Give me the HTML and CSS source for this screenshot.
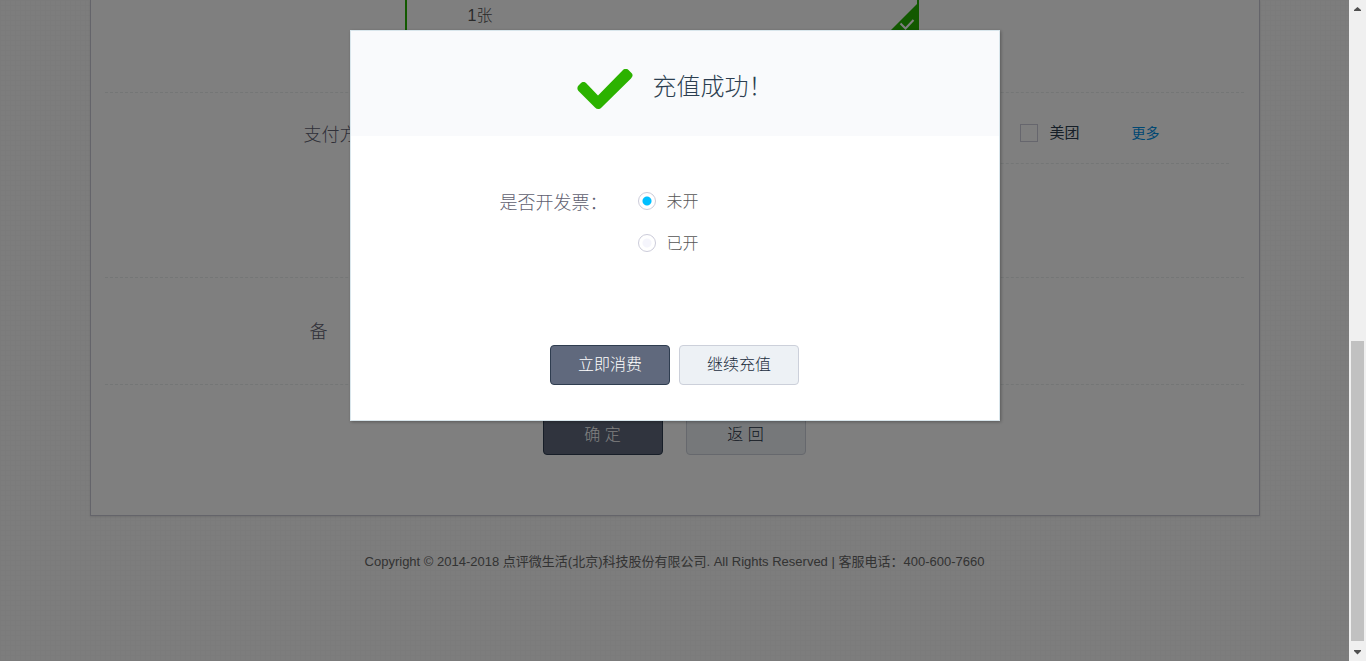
FILE: index.html
```html
<!DOCTYPE html>
<html lang="zh-CN">
<head>
<meta charset="utf-8">
<title>充值成功</title>
<link rel="stylesheet" href="styles.css">
</head>
<body>
<div class="stage">
  <main class="panel">
    <section class="row row-coupon">
      <div class="field">
        <div class="coupon">
          <span>1张</span>
          <svg class="corner" viewBox="0 0 31 31" aria-hidden="true"><path d="M31 0V31H0Z" fill="#24b300"/><path d="M12.500 21.500L17.500 26.500L25.500 18" fill="none" stroke="#fff" stroke-width="2"/></svg>
        </div>
      </div>
    </section>
    <section class="row row-pay">
      <span class="label">支付方式：</span>
      <div class="field pay-options">
        <label class="option"><input class="tick" type="checkbox">美团</label>
        <a class="more" href="#">更多</a>
      </div>
    </section>
    <section class="row row-note">
      <span class="label">备 &nbsp; &nbsp; &nbsp;注：</span>
    </section>
    <div class="actions page-actions">
      <button class="btn btn-dark" type="button">确 定</button>
      <button class="btn btn-light" type="button">返 回</button>
    </div>
  </main>
  <footer class="footer">Copyright © 2014-2018 点评微生活(北京)科技股份有限公司. All Rights Reserved | 客服电话：400-600-7660</footer>
  <div class="overlay">
    <div class="modal" role="dialog" aria-labelledby="title">
      <header class="modal-head">
        <svg class="check" viewBox="0 0 56 40" aria-hidden="true"><path d="M6.500 13C5 13 4.500 13.500 3.500 14.500L1.500 16.500C0 18 0 20.500 1.500 22L18 38.500C20 40.500 22.500 40.500 24.500 38.500L54 9.500C56 7.500 56 5.500 54.500 4L51.500 1C50 -.5 47.500 -.5 46 1L21 26.500L9.500 14.500C8.500 13.500 8 13 6.500 13Z" fill="#2cb200"/></svg>
        <h1 class="title" id="title">充值成功！</h1>
      </header>
      <div class="invoice" role="radiogroup" aria-labelledby="invoice">
        <span class="label" id="invoice">是否开发票：</span>
        <div class="choices">
          <label class="choice"><input class="radio" type="radio" name="invoice" checked><span class="choice-text">未开</span></label>
          <label class="choice"><input class="radio" type="radio" name="invoice"><span class="choice-text">已开</span></label>
        </div>
      </div>
      <div class="actions modal-actions">
        <button class="btn btn-dark" type="button">立即消费</button>
        <button class="btn btn-light" type="button">继续充值</button>
      </div>
    </div>
  </div>
</div>
<div class="scrollbar" aria-hidden="true">
  <svg class="arrow" viewBox="0 0 17 17"><path d="M5 11V10L8.500 7L12 10V11Z" fill="#505050"/></svg>
  <div class="track"><div class="thumb"></div></div>
  <svg class="arrow" viewBox="0 0 17 17"><path d="M5 6V7L8.500 10.500L12 7V6Z" fill="#505050"/></svg>
</div>
</body>
</html>
```
FILE: styles.css
```css
* { box-sizing: border-box; }

body {
  display: grid;
  grid-template-columns: 1fr 17px;
  min-height: 100vh;
  margin: 0;
  font: 16px/24px "Liberation Sans", "Noto Sans CJK SC", sans-serif;
  font-weight: 300;
  color: #555;
}

.stage {
  position: relative;
  background-color: #fafafa;
  background-image:
    linear-gradient(#f6f6f6 1px, transparent 1px),
    linear-gradient(90deg, #f6f6f6 1px, transparent 1px);
  background-size: 5px 5px;
}

.panel {
  max-width: 1170px;
  margin: 0 auto;
  padding: 0 15px 60px 14px;
  border: 1px solid #c9c9d4;
  border-top: 0;
  background: #fff;
  box-shadow: 0 1px 2px rgba(0, 0, 0, .1);
}

.row {
  display: grid;
  grid-template-columns: 289px 1fr;
  column-gap: 11px;
  align-items: start;
  border-bottom: 1px dashed #e8ecec;
}

.row-coupon { padding-bottom: 58px; }
.row-pay { min-height: 185px; }
.row-note { min-height: 107px; padding-top: 12px; }

.field { grid-column: 2; }

.label {
  padding-top: 30px;
  font-size: 18px;
  text-align: right;
  color: #606070;
}

.coupon {
  position: relative;
  width: 514px;
  height: 34px;
  padding: 4px 61px;
  border: 2px solid #24b300;
  border-top: 0;
}

.corner {
  position: absolute;
  right: -2px;
  bottom: -1px;
  width: 31px;
  height: 31px;
}

.pay-options {
  display: flex;
  justify-content: flex-end;
  align-items: center;
  gap: 52px;
  height: 71px;
  margin-right: 15px;
  padding: 10px 69px 0 0;
  border-bottom: 1px dashed #e8ecec;
}

.option {
  display: flex;
  align-items: center;
  gap: 11px;
  font-size: 15px;
  font-weight: 400;
  color: #2c3e50;
}

.tick {
  appearance: none;
  width: 18px;
  height: 18px;
  margin: 0;
  border: 1px solid #ccccda;
}

.more {
  font-size: 14px;
  font-weight: 400;
  color: #0090e6;
  text-decoration: none;
}

.actions {
  display: flex;
  justify-content: center;
}

.page-actions { gap: 23px; padding-top: 30px; }

.btn {
  width: 120px;
  height: 40px;
  padding: 0;
  border: 1px solid;
  border-radius: 4px;
  font: inherit;
}

.btn-dark {
  border-color: #2f3d50;
  background: #60697d;
  color: #fff;
}

.btn-light {
  border-color: #ccd0da;
  background: #edf1f5;
  color: #1c2e40;
}

.footer {
  padding: 34px 0;
  font-size: 13px;
  font-weight: 400;
  text-align: center;
  color: #666;
}

.overlay {
  position: absolute;
  inset: 0;
  display: flex;
  justify-content: center;
  align-items: flex-start;
  padding-top: 30px;
  background: rgba(0, 0, 0, .5);
}

.modal {
  width: 650px;
  padding-bottom: 35px;
  border: 1px solid #d9e6ec;
  background: #fff;
  box-shadow: 1px 1px 3px rgba(0, 0, 0, .3);
}

.modal-head {
  display: flex;
  justify-content: center;
  align-items: center;
  gap: 20px;
  height: 105px;
  padding-top: 11px;
  background: #f9fafc;
}

.check {
  width: 56px;
  height: 40px;
}

.title {
  margin: 0;
  padding-bottom: 4px;
  font-size: 24px;
  font-weight: 300;
  line-height: 32px;
  color: #2c3e50;
}

.invoice {
  display: flex;
  gap: 30px;
  padding: 44px 0 0 149px;
}

.invoice .label { padding-top: 11px; }

.choice {
  display: flex;
  align-items: center;
  gap: 11px;
  height: 42px;
}

.choice-text { padding-top: 2px; }

.radio {
  appearance: none;
  width: 18px;
  height: 18px;
  margin: 0;
  border: 1px solid #ccccda;
  border-radius: 50%;
  background: radial-gradient(circle, #f5f5fc 4px, #fff 5px);
}

.radio:checked { background: radial-gradient(circle, #00bfff 4px, #fff 5px); }

.modal-actions { gap: 9px; padding-top: 81px; }

.scrollbar {
  display: grid;
  grid-template-rows: 17px 1fr 17px;
  background: #f0f0f0;
}

.arrow {
  width: 17px;
  height: 17px;
}

.track {
  display: flex;
  flex-direction: column;
  justify-content: flex-end;
  padding: 0 2px 3px;
}

.thumb {
  height: 48%;
  background: #c1c1c1;
}
```
